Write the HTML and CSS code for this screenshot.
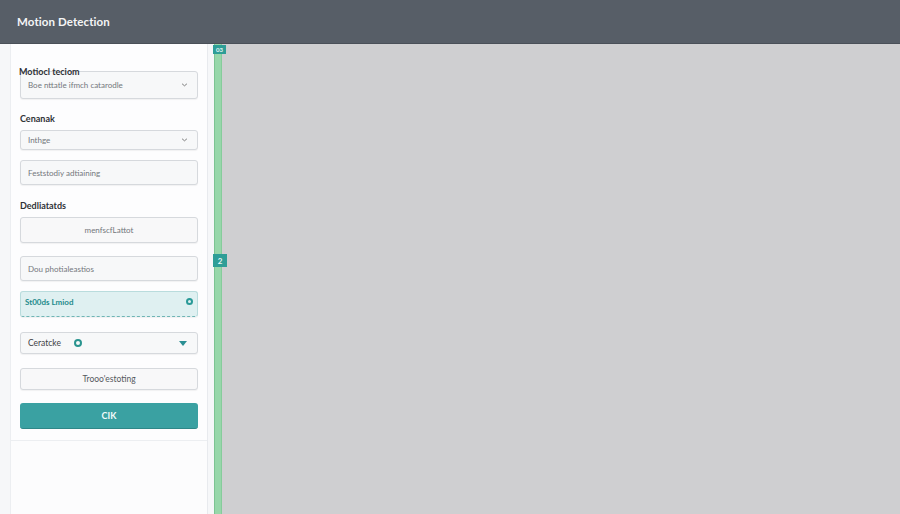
FILE: index.html
```html
<!DOCTYPE html>
<html>
<head>
<meta charset="utf-8">
<link rel="stylesheet" href="styles.css">
</head>
<body>
<header class="topbar"><span class="title">Motion Detection</span></header>
<main class="main">
  <aside class="sidebar">
    <div class="panel">
      <div class="card">
        <div class="label label-first">Motiocl teciom</div>
        <div class="field select tall"><span>Boe nttatle ifmch catarodle</span><svg class="chev" width="7" height="4" viewBox="0 0 8 5"><path d="M1 1l3 2.5L7 1" fill="none" stroke="#777" stroke-width="1.2"/></svg></div>
        <div class="label label-2">Cenanak</div>
        <div class="field select short"><span>Inthge</span><svg class="chev" width="7" height="4" viewBox="0 0 8 5"><path d="M1 1l3 2.5L7 1" fill="none" stroke="#777" stroke-width="1.2"/></svg></div>
        <div class="field input f3"><span>Feststodiy adtiaining</span></div>
        <div class="label label-3">Dedliatatds</div>
        <div class="field btn f4"><span>menfscfLattot</span></div>
        <div class="field input f5"><span>Dou photialeastios</span></div>
        <div class="field active f6"><span>St00ds Lmiod</span><span class="ring"></span></div>
        <div class="field select f7"><span>Ceratcke</span><span class="dot"></span><svg class="caret" width="10" height="7" viewBox="0 0 10 7"><path d="M1 1h8L5 6z" fill="#2a8f93"/></svg></div>
        <div class="field btn f8"><span>Trooo'estoting</span></div>
        <div class="primary"><span>CIK</span></div>
      </div>
    </div>
  </aside>
  <div class="rail">
    <span class="badge badge-top">03</span>
    <span class="badge badge-mid">2</span>
  </div>
  <section class="canvas"></section>
</main>
</body>
</html>
```
FILE: styles.css
```css
* { box-sizing: border-box; }
html, body { margin: 0; padding: 0; }
body {
  width: 900px;
  height: 514px;
  overflow: hidden;
  font-family: Lato, "Open Sans", "Liberation Sans", sans-serif;
  background: #f6f7f9;
}
.topbar {
  height: 44px;
  background: #575e67;
  border-bottom: 1px solid #4a5058;
  display: flex;
  align-items: center;
  padding-left: 17px;
}
.title {
  color: #f4f5f6;
  font-size: 11.5px;
  font-weight: 700;
  letter-spacing: 0.1px;
}
.main {
  display: flex;
  height: 470px;
}
.sidebar {
  width: 213px;
  padding-left: 10px;
  padding-right: 5px;
  background: #f6f7f9;
}
.panel {
  height: 100%;
  background: #fcfcfd;
  border-left: 1px solid #eceef1;
  border-right: 1px solid #e8eaee;
}
.card {
  padding: 22px 9px 11px 9px;
  border-bottom: 1px solid #eceef1;
  background: #fdfdfe;
  display: flex;
  flex-direction: column;
}
.label {
  font-size: 9px;
  font-weight: 700;
  color: #2f3237;
  line-height: 12px;
  position: relative;
  z-index: 1;
}
.label-first { margin-left: -1px; }
.field {
  width: 178px;
  border: 1px solid #d6d9dd;
  border-radius: 3px;
  background: #f7f8f9;
  box-shadow: 0 1px 1px rgba(0,0,0,0.05);
  display: flex;
  align-items: center;
  padding: 0 7px;
  font-size: 8px;
  color: #73777c;
}
.select { justify-content: space-between; }
.tall { height: 28px; margin-top: -7px; }
.chev { margin-right: 2px; }
.label-2 { margin-top: 14px; }
.short { height: 20px; margin-top: 5px; }
.f3 { height: 25px; margin-top: 10px; }
.label-3 { margin-top: 15px; }
.f4 { height: 26px; margin-top: 5px; justify-content: center; background: #f8f8f9; }
.f5 { height: 25px; margin-top: 13px; }
.active {
  height: 26px;
  margin-top: 10px;
  background: #dff0f1;
  border: 1px solid #b9dcdd;
  border-bottom: 1px dashed #6fb5b5;
  justify-content: space-between;
  align-items: flex-start;
  padding: 5px 4px 0 4px;
  color: #1e8b8c;
  font-weight: 700;
}
.ring {
  width: 7px;
  height: 7px;
  border: 2px solid #2a9a98;
  border-radius: 50%;
  margin-top: 1px;
}
.f7 { height: 22px; margin-top: 15px; justify-content: flex-start; color: #3d4045; font-size: 8.5px; }
.dot {
  width: 8px;
  height: 8px;
  border: 2.5px solid #2a948f;
  border-radius: 50%;
  margin-left: 13px;
}
.caret { margin-left: auto; margin-right: 2px; }
.f8 { height: 22px; margin-top: 14px; justify-content: center; color: #55595e; font-size: 8.5px; background: #f8f8f9; }
.primary {
  width: 178px;
  height: 26px;
  margin-top: 13px;
  background: #3aa1a2;
  border-radius: 3px;
  border-bottom: 1px solid #2e8788;
  display: flex;
  align-items: center;
  justify-content: center;
  color: #f2fbfb;
  font-size: 9px;
  font-weight: 700;
}
.rail {
  width: 8px;
  margin-left: 1px;
  background: #97d7aa;
  border-left: 1px solid #7cc493;
  border-right: 1px solid #86cc9b;
  position: relative;
}
.badge {
  position: absolute;
  left: -2px;
  background: #2e9e97;
  color: #e9f7f6;
  font-size: 6px;
  font-weight: 700;
  display: flex;
  align-items: center;
  justify-content: center;
}
.badge-top { top: 1px; width: 13px; height: 9px; }
.badge-mid { top: 210px; width: 14px; height: 13px; font-size: 8px; }
.canvas {
  flex: 1;
  background: #cfcfd1;
}
```
